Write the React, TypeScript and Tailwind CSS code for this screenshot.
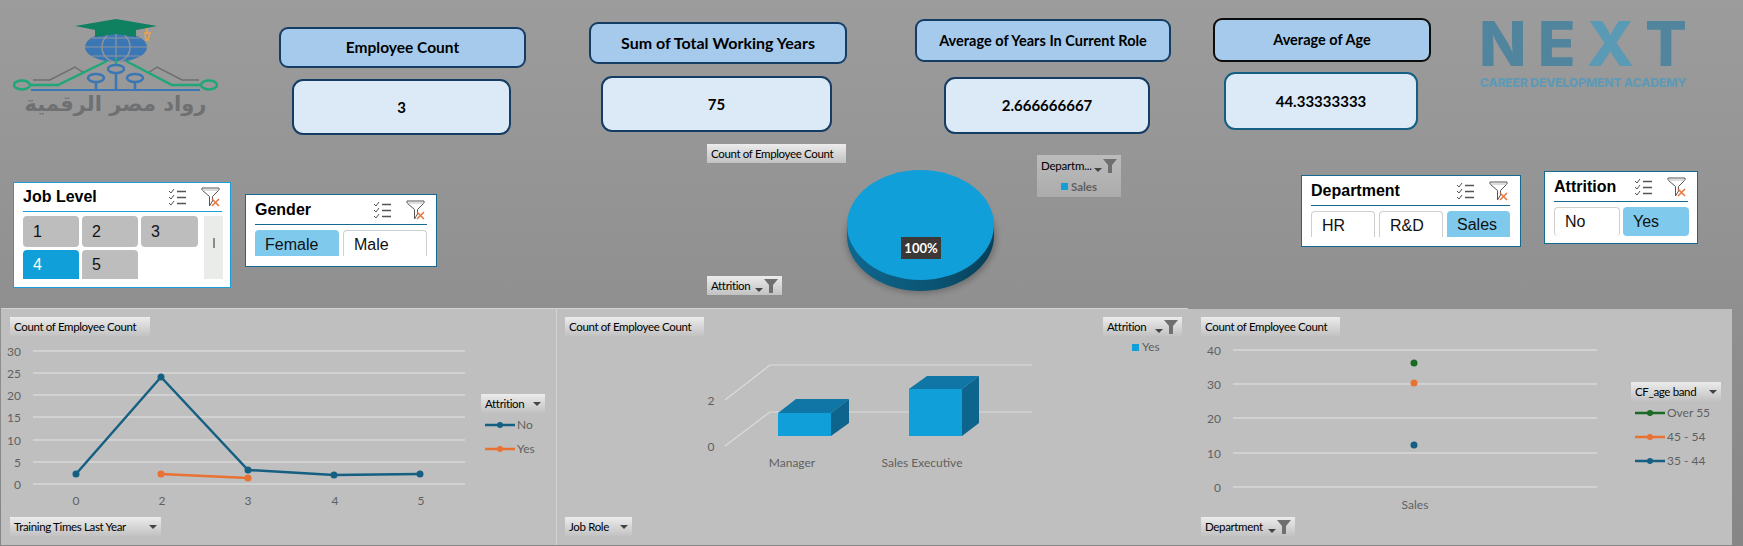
const kpis = [
  {
    label: 'Employee Count',
    value: '3',
    col: 'ml-[61px] mt-[27px] w-[247px]',
    head: 'h-[41px] w-[247px] border-[#153d64] text-[15.5px]',
    body: 'ml-[13px] mt-[11px] h-[56px] w-[219px] border-[#153d64]',
  },
  {
    label: 'Sum of Total Working Years',
    value: '75',
    col: 'ml-[63px] mt-[22px] w-[258px]',
    head: 'h-[42px] w-[258px] border-[#153d64] text-[16px]',
    body: 'ml-[12px] mt-[12px] h-[56px] w-[231px] border-[#153d64]',
  },
  {
    label: 'Average of Years In Current Role',
    value: '2.666666667',
    col: 'ml-[68px] mt-[19px] w-[256px]',
    head: 'h-[43px] w-[256px] border-[#153d64] text-[14.5px]',
    body: 'ml-[29px] mt-[15px] h-[57px] w-[206px] border-[#153d64]',
  },
  {
    label: 'Average of Age',
    value: '44.33333333',
    col: 'ml-[42px] mt-[18px] w-[218px]',
    head: 'h-[44px] w-[218px] border-[#0c0c0c] text-[14.5px]',
    body: 'ml-[11px] mt-[10px] h-[58px] w-[194px] border-[#156082]',
  },
];

function Kpi({ item }: { item: (typeof kpis)[number] }) {
  return (
    <div className={item.col}>
      <div className={`flex items-center justify-center rounded-[9px] border-2 bg-[#a6caec] font-['Lato',sans-serif] font-bold text-black ${item.head}`}>
        {item.label}
      </div>
      <div className={`flex items-center justify-center rounded-[11px] border-2 bg-[#dceaf7] font-['Lato',sans-serif] text-[15px] font-bold text-black ${item.body}`}>
        {item.value}
      </div>
    </div>
  );
}

function MultiSelectIcon() {
  return (
    <svg viewBox="0 0 18 18" className="h-[18px] w-[18px]" fill="none" stroke="#555" strokeWidth="1">
      <path d="M1 3l2 2 3-4M1 9l2 2 3-4M1 15l2 2 3-4" />
      <path d="M9 3.5h9M9 9.5h9M9 15.5h9" strokeWidth="1.4" />
    </svg>
  );
}

function ClearFilterIcon() {
  return (
    <svg viewBox="0 0 19 20" className="h-[20px] w-[19px]" fill="none">
      <path d="M1 1h17v2l-6.5 6.5V14l-3 5V9.5L1 3z" stroke="#555" strokeWidth="1" fill="#fff" />
      <path d="M1 3h17" stroke="#bbb" strokeWidth="1" />
      <path d="M11 12l7 7M18 12l-7 7" stroke="#e8743b" strokeWidth="1.5" />
    </svg>
  );
}

function SlicerHead({ title, className }: { title: string; className: string }) {
  return (
    <div className={`flex items-center border-b pr-[2px] text-[16px] font-bold text-black ${className}`}>
      <span>{title}</span>
      <span className="ml-auto flex items-center gap-[15px]">
        <MultiSelectIcon />
        <ClearFilterIcon />
      </span>
    </div>
  );
}

function TabButton({ label, on, className }: { label: string; on?: boolean; className: string }) {
  return (
    <div
      className={`flex items-center rounded-t-[4px] pl-[10px] text-[16px] ${
        on ? 'bg-[#7fc9ec] text-[#111]' : 'border border-b-0 border-[#cfcfcf] bg-white text-[#111]'
      } ${className}`}
    >
      {label}
    </div>
  );
}

function Funnel() {
  return (
    <svg viewBox="0 0 14 14" className="h-[14px] w-[14px]">
      <path d="M0 0h14L9 6v8H5V6z" fill="#6f6f6f" />
    </svg>
  );
}

function Caret() {
  return <span className="h-0 w-0 border-x-[4px] border-t-[4px] border-x-transparent border-t-[#444]" />;
}

function FieldButton({ label, className, filter }: { label: string; className: string; filter?: boolean }) {
  return (
    <div className={`flex h-[19px] items-center bg-gradient-to-b from-[#ececec] to-[#c2c2c2] pl-[4px] font-['Lato',sans-serif] text-[11.5px] tracking-[-0.35px] text-black ${className}`}>
      <span className="whitespace-nowrap">{label}</span>
      {filter === undefined ? null : (
        <span className="ml-auto flex items-center gap-[1px] pr-[4px]">
          <span className={filter ? 'mt-[8px] flex' : 'flex'}>
            <Caret />
          </span>
          {filter ? <Funnel /> : null}
        </span>
      )}
    </div>
  );
}

function LegendLine({ label, color }: { label: string; color: string }) {
  return (
    <div className="flex h-[24px] items-center font-['Lato',sans-serif] text-[12px] text-[#5f5f5f]">
      <svg viewBox="0 0 30 8" className="mr-[2px] h-[8px] w-[30px]">
        <path d="M0 4h30" stroke={color} strokeWidth="2.5" />
        <circle cx="15" cy="4" r="3" fill={color} />
      </svg>
      {label}
    </div>
  );
}

function RawadLogo() {
  return (
    <div className="ml-[13px] mt-[18px] w-[205px]">
      <svg viewBox="13 18 205 76" className="block h-[76px] w-[205px]" fill="none">
        <ellipse cx="116" cy="47" rx="31" ry="15" fill="#3b76b5" />
        <path d="M116 32v30M85 47h62M92 38h48M92 56h48" stroke="#8f959b" strokeWidth="1.2" />
        <ellipse cx="116" cy="47" rx="14" ry="15" stroke="#8f959b" strokeWidth="1.5" />
        <path d="M75 26l41-7 41 7-41 8z" fill="#0f8060" />
        <path d="M95 29h41v8l-20-3-21 3z" fill="#0f8060" />
        <path d="M147 28v6M145 33h5l-2 7h-2z" stroke="#f0a347" strokeWidth="1.5" />
        <path d="M33 80h17l25-13 9 6M199 80h-17l-25-13-9 6" stroke="#6f6f6f" strokeWidth="1.5" />
        <path d="M31 90h169" stroke="#3b76b5" strokeWidth="2" />
        <path d="M116 73v17M96 82v8M135 82v8" stroke="#3b76b5" strokeWidth="2.5" />
        <ellipse cx="116" cy="69" rx="8" ry="4" stroke="#3b76b5" strokeWidth="2.5" />
        <ellipse cx="96" cy="78" rx="8" ry="4" stroke="#3b76b5" strokeWidth="2.5" />
        <ellipse cx="135" cy="78" rx="8" ry="4" stroke="#3b76b5" strokeWidth="2.5" />
        <path d="M31 85h27l49-24M201 85h-29l-46-24M116 58v6" stroke="#1fa67a" strokeWidth="2.5" />
        <ellipse cx="22" cy="85" rx="8" ry="4.5" stroke="#1fa67a" strokeWidth="2.5" />
        <ellipse cx="209" cy="85" rx="8" ry="4.5" stroke="#1fa67a" strokeWidth="2.5" />
      </svg>
      <div dir="rtl" className="whitespace-nowrap text-center font-['DejaVu_Sans',sans-serif] text-[21px] font-bold leading-[20px] text-[#6e7072]">
        رواد مصر الرقمية
      </div>
    </div>
  );
}

function NextLogo() {
  return (
    <div className="ml-[48px] mt-[20px] w-[208px]">
      <div className="flex h-[48px] items-center justify-between font-['Inter',sans-serif] text-[62px] font-extrabold leading-[48px] text-[#51859d]">
        <span>N</span>
        <span>E</span>
        <span className="text-[#5a9ab5]">X</span>
        <span>T</span>
      </div>
      <div className="mt-[9px] whitespace-nowrap text-center font-['Inter',sans-serif] text-[12.2px] font-extrabold leading-[12px] tracking-[-0.2px] text-[#5f9ab5]">
        CAREER DEVELOPMENT ACADEMY
      </div>
    </div>
  );
}

function PieChart() {
  return (
    <svg viewBox="847 170 147 125" className="mt-[28px] block h-[125px] w-[147px] overflow-visible">
      <defs>
        <linearGradient id="pieSide" x1="0" x2="1" y1="0" y2="0">
          <stop offset="0" stopColor="#0f678f" />
          <stop offset="0.6" stopColor="#0b5372" />
          <stop offset="1" stopColor="#063f59" />
        </linearGradient>
        <filter id="pieShadow" x="-20%" y="-20%" width="140%" height="140%">
          <feGaussianBlur stdDeviation="3" />
        </filter>
      </defs>
      <ellipse cx="921" cy="238" rx="75" ry="55" fill="#000" opacity="0.25" filter="url(#pieShadow)" />
      <path d="M847 225v11c0 30 33 55 73 55s74-25 74-55v-11z" fill="url(#pieSide)" />
      <ellipse cx="920.5" cy="225" rx="73.5" ry="55" fill="#109fd9" />
      <rect x="901" y="237" width="40" height="22" fill="#3d3838" />
      <text x="921" y="252.5" textAnchor="middle" fontSize="13" fontWeight="700" fill="#fff" fontFamily="Lato, sans-serif">
        100%
      </text>
    </svg>
  );
}

const axisText = { fontSize: 12, fill: '#5f5f5f', fontFamily: 'Lato, sans-serif' };

function LineChart() {
  const ticks = [
    [30, 351],
    [25, 373],
    [20, 395],
    [15, 417],
    [10, 440],
    [5, 462],
    [0, 484],
  ];
  const xs = [
    ['0', 76],
    ['2', 162],
    ['3', 248],
    ['4', 335],
    ['5', 421],
  ] as const;
  const no = [
    [76, 474],
    [161, 377],
    [248, 470],
    [334, 475],
    [420, 474],
  ];
  const yes = [
    [161, 474],
    [248, 478],
  ];
  return (
    <svg viewBox="1 336 471 181" className="block h-[181px] w-[471px] shrink-0" fill="none">
      {ticks.map(([t, y]) => (
        <g key={t}>
          <path d={`M33 ${y}H465`} stroke="#e4e4e4" strokeWidth="1" />
          <text x="21" y={y + 4.5} textAnchor="end" {...axisText}>
            {t}
          </text>
        </g>
      ))}
      {xs.map(([t, x]) => (
        <text key={t} x={x} y="504.5" textAnchor="middle" {...axisText}>
          {t}
        </text>
      ))}
      <polyline points={no.map((p) => p.join(',')).join(' ')} stroke="#156082" strokeWidth="2.5" />
      {no.map(([x, y]) => (
        <circle key={x} cx={x} cy={y} r="3.5" fill="#156082" />
      ))}
      <polyline points={yes.map((p) => p.join(',')).join(' ')} stroke="#e97132" strokeWidth="2.5" />
      {yes.map(([x, y]) => (
        <circle key={x} cx={x} cy={y} r="3.5" fill="#e97132" />
      ))}
    </svg>
  );
}

function BarChart() {
  return (
    <svg viewBox="557 336 540 181" className="block h-[181px] w-[540px] shrink-0" fill="none">
      <path d="M725 400L770 365H1032M725 446L770 412H1032" stroke="#dcdcdc" strokeWidth="1.2" />
      <text x="711" y="405" textAnchor="middle" {...axisText}>2</text>
      <text x="711" y="451" textAnchor="middle" {...axisText}>0</text>

      <path d="M778 413L796 399H849L831 413z" fill="#0f76a6" />
      <path d="M831 413L849 399V423L831 436z" fill="#0d658d" />
      <rect x="778" y="413" width="53" height="23" fill="#109fd9" />

      <path d="M909 389L927 376H979L962 389z" fill="#0f76a6" />
      <path d="M962 389L979 376V423L962 436z" fill="#0d658d" />
      <rect x="909" y="389" width="53" height="47" fill="#109fd9" />

      <text x="792" y="467" textAnchor="middle" {...axisText}>Manager</text>
      <text x="922" y="467" textAnchor="middle" {...axisText}>Sales Executive</text>
    </svg>
  );
}

function DotChart() {
  const ticks = [
    [40, 350],
    [30, 384],
    [20, 418],
    [10, 453],
    [0, 487],
  ];
  return (
    <svg viewBox="1188 336 433 181" className="block h-[181px] w-[433px] shrink-0" fill="none">
      {ticks.map(([t, y]) => (
        <g key={t}>
          <path d={`M1233 ${y}H1597`} stroke="#e4e4e4" strokeWidth="1" />
          <text x="1221" y={y + 4.5} textAnchor="end" {...axisText}>
            {t}
          </text>
        </g>
      ))}
      <circle cx="1414" cy="363" r="3.5" fill="#196b24" />
      <circle cx="1414" cy="383" r="3.5" fill="#e97132" />
      <circle cx="1414" cy="445" r="3.5" fill="#156082" />
      <text x="1415" y="509" textAnchor="middle" {...axisText}>Sales</text>
    </svg>
  );
}

export default function App() {
  return (
    <div className="h-[546px] w-[1743px] overflow-hidden bg-gradient-to-b from-[#9c9c9c] to-[#868686] font-['Liberation_Sans',Arial,sans-serif]">
      <div className="flex h-[142px]">
        <RawadLogo />
        {kpis.map((k) => (
          <Kpi key={k.label} item={k} />
        ))}
        <NextLogo />
      </div>

      <div className="flex h-[166px]">
        {/* Job Level */}
        <div className="ml-[13px] mt-[40px] h-[106px] w-[218px] border border-[#19a0da] bg-white pl-[9px]">
          <SlicerHead title="Job Level" className="h-[29px] w-[199px] border-[#19a0da]" />
          <div className="mt-[4px] flex">
            <div className="grid w-[175px] grid-cols-[56px_56px_57px] grid-rows-[31px_29px] gap-[3px] text-[16px] text-[#111]">
              <div className="flex items-center rounded-[4px] bg-[#bdbdbd] pl-[10px]">1</div>
              <div className="flex items-center rounded-[4px] bg-[#bdbdbd] pl-[10px]">2</div>
              <div className="flex items-center rounded-[4px] bg-[#bdbdbd] pl-[10px]">3</div>
              <div className="flex items-center rounded-t-[4px] bg-[#109fd9] pl-[10px] text-white">4</div>
              <div className="flex items-center rounded-t-[4px] bg-[#bdbdbd] pl-[10px]">5</div>
            </div>
            <div className="ml-[6px] flex h-[63px] w-[19px] justify-center bg-[#e9ece9] pt-[22px]">
              <div className="h-[10px] w-[2px] bg-[#8a8a8a]" />
            </div>
          </div>
        </div>

        {/* Gender */}
        <div className="ml-[14px] mt-[52px] h-[73px] w-[192px] border border-[#17688f] bg-white pl-[9px]">
          <SlicerHead title="Gender" className="h-[30px] w-[172px] border-[#17688f]" />
          <div className="mt-[5px] flex gap-[4px]">
            <TabButton label="Female" on className="h-[26px] w-[84px] pt-[3px]" />
            <TabButton label="Male" className="h-[26px] w-[84px] pt-[3px]" />
          </div>
        </div>

        {/* pie chart */}
        <div className="ml-[270px] flex w-[414px]">
          <div className="mt-[2px] flex h-[151px] w-[140px] flex-col items-start justify-between">
            <FieldButton label="Count of Employee Count" className="w-[139px]" />
            <FieldButton label="Attrition" filter className="w-[75px]" />
          </div>
          <PieChart />
          <div className="ml-[43px] mt-[13px] h-[42px] w-[84px] bg-gradient-to-b from-[#bcbcbc] to-[#ababab]">
            <div className="flex h-[21px] items-center pl-[4px] font-['Lato',sans-serif] text-[11.5px] tracking-[-0.2px] text-black">
              Departm...
              <span className="ml-auto flex items-center gap-[1px] pr-[4px]">
                <span className="mt-[8px] flex">
                  <Caret />
                </span>
                <Funnel />
              </span>
            </div>
            <div className="flex h-[21px] items-center justify-center gap-[3px] font-['Lato',sans-serif] text-[11.5px] font-bold text-[#5f5f5f]">
              <span className="h-[7px] w-[7px] bg-[#109fd9]" />
              Sales
            </div>
          </div>
        </div>

        {/* Department */}
        <div className="ml-[180px] mt-[33px] h-[72px] w-[220px] border border-[#17688f] bg-white pl-[9px]">
          <SlicerHead title="Department" className="h-[30px] w-[199px] border-[#17688f]" />
          <div className="mt-[5px] flex gap-[4px]">
            <TabButton label="HR" className="h-[26px] w-[64px] pt-[2px]" />
            <TabButton label="R&D" className="h-[26px] w-[64px] pt-[2px]" />
            <TabButton label="Sales" on className="h-[26px] w-[63px] pt-[2px]" />
          </div>
        </div>

        {/* Attrition */}
        <div className="ml-[23px] mt-[29px] h-[73px] w-[154px] border border-[#17688f] bg-white pl-[9px]">
          <SlicerHead title="Attrition" className="h-[30px] w-[134px] border-[#17688f]" />
          <div className="mt-[5px] flex gap-[3px]">
            <TabButton label="No" className="h-[29px] w-[66px] rounded-b-[4px]" />
            <TabButton label="Yes" on className="h-[29px] w-[66px] rounded-b-[4px]" />
          </div>
        </div>
      </div>

      <div className="flex h-[238px]">
        <div className="ml-[1px] h-[237px] w-[556px] border-r border-t border-[#d2d2d2] bg-[#bfbfbf] pl-[9px] pt-[8px]">
          <FieldButton label="Count of Employee Count" className="w-[140px]" />
          <div className="-ml-[9px] flex h-[181px]">
            <LineChart />
            <div className="ml-[9px] mt-[58px] w-[64px]">
              <FieldButton label="Attrition" filter={false} className="w-[64px]" />
              <div className="pl-[4px]">
                <LegendLine label="No" color="#156082" />
                <LegendLine label="Yes" color="#e97132" />
              </div>
            </div>
          </div>
          <FieldButton label="Training Times Last Year" filter={false} className="w-[151px]" />
        </div>

        <div className="h-[237px] w-[631px] border-t border-[#d2d2d2] bg-[#bfbfbf] pl-[8px] pr-[6px] pt-[8px]">
          <div className="flex justify-between">
            <FieldButton label="Count of Employee Count" className="w-[139px]" />
            <FieldButton label="Attrition" filter className="w-[79px]" />
          </div>
          <div className="-ml-[8px] flex h-[181px]">
            <BarChart />
            <div className="ml-[35px] mt-[3px] flex h-[16px] items-center gap-[3px] font-['Lato',sans-serif] text-[12px] text-[#5f5f5f]">
              <span className="h-[7px] w-[7px] bg-[#109fd9]" />
              Yes
            </div>
          </div>
          <FieldButton label="Job Role" filter={false} className="w-[67px]" />
        </div>

        <div className="mt-[1px] h-[236px] w-[544px] bg-[#bfbfbf] pl-[13px] pt-[8px]">
          <FieldButton label="Count of Employee Count" className="w-[139px]" />
          <div className="-ml-[13px] flex h-[181px]">
            <DotChart />
            <div className="ml-[10px] mt-[46px] w-[90px]">
              <FieldButton label="CF_age band" filter={false} className="w-[90px]" />
              <div className="pl-[4px]">
                <LegendLine label="Over 55" color="#196b24" />
                <LegendLine label="45 - 54" color="#e97132" />
                <LegendLine label="35 - 44" color="#156082" />
              </div>
            </div>
          </div>
          <FieldButton label="Department" filter className="w-[94px]" />
        </div>
      </div>
    </div>
  );
}
